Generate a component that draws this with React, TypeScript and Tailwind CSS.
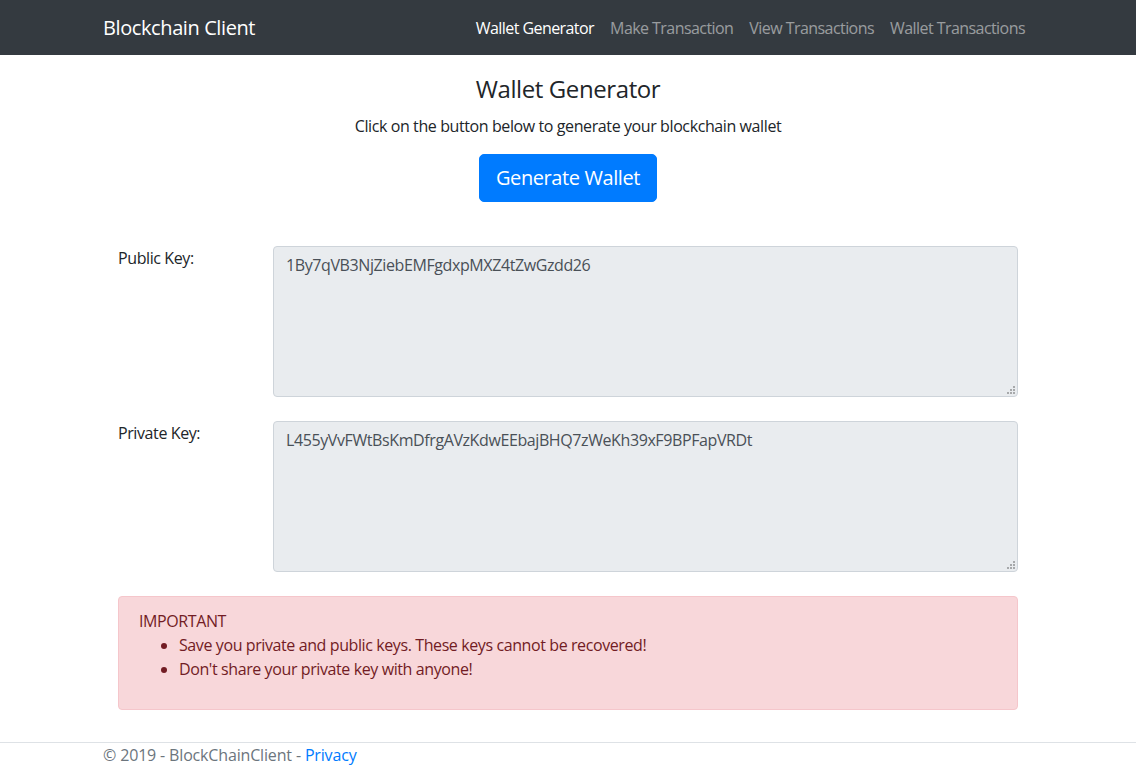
const navLinks = [
  { label: "Wallet Generator", active: true },
  { label: "Make Transaction", active: false },
  { label: "View Transactions", active: false },
  { label: "Wallet Transactions", active: false },
];

const keys = [
  { label: "Public Key:", value: "1By7qVB3NjZiebEMFgdxpMXZ4tZwGzdd26" },
  { label: "Private Key:", value: "L455yVvFWtBsKmDfrgAVzKdwEEbajBHQ7zWeKh39xF9BPFapVRDt" },
];

function Grip() {
  return (
    <svg width="8" height="8" viewBox="0 0 8 8" className="absolute right-[3px] bottom-[3px] pointer-events-none">
      <g fill="#a7a9ab">
        <rect x="6" y="0" width="2" height="2" />
        <rect x="3" y="3" width="2" height="2" />
        <rect x="6" y="3" width="2" height="2" />
        <rect x="0" y="6" width="2" height="2" />
        <rect x="3" y="6" width="2" height="2" />
        <rect x="6" y="6" width="2" height="2" />
      </g>
    </svg>
  );
}

export default function App() {
  return (
    <div className="min-h-[765px] bg-white text-[16px] leading-[24px] tracking-[-0.025em] text-[#212529] font-['Open_Sans',sans-serif] flex flex-col">
      <nav className="bg-[#343a40] h-[55px]">
        <div className="w-[960px] mx-auto px-[15px] h-full flex items-center justify-between">
          <a className="text-white text-[20px] leading-[30px]">Blockchain Client</a>
          <ul className="flex tracking-[-0.035em]">
            {navLinks.map((l) => (
              <li key={l.label}>
                <a className={`px-2 ${l.active ? "text-white" : "text-white/50"}`}>{l.label}</a>
              </li>
            ))}
          </ul>
        </div>
      </nav>

      <main className="flex-1 w-[960px] mx-auto px-[15px]">
        <div className="text-center pt-[19px]">
          <h4 className="text-[24px] leading-[29px] mb-[11px]">Wallet Generator</h4>
          <p className="mb-4">Click on the button below to generate your blockchain wallet</p>
          <button className="bg-[#007bff] text-white text-[20px] leading-[30px] px-4 py-2 rounded-[5px] border border-[#007bff]">
            Generate Wallet
          </button>
        </div>

        <div className="mt-[44px] flex flex-col gap-6">
          {keys.map((k) => (
            <div key={k.label} className="flex">
              <label className="w-[155px] px-[15px]">{k.label}</label>
              <div className="flex-1 px-[15px]">
                <div className="relative">
                  <textarea
                    readOnly
                    value={k.value}
                    className="block w-full h-[151px] resize-none bg-[#e9ecef] border border-[#ced4da] rounded-[4px] px-3 py-[6px] text-[#495057] outline-none"
                  />
                  <Grip />
                </div>
              </div>
            </div>
          ))}

          <div className="mx-[15px] bg-[#f8d7da] border border-[#f5c6cb] rounded-[4px] px-5 py-3 text-[#721c24]">
            <div>IMPORTANT</div>
            <ul className="list-disc pl-10 mb-4">
              <li>Save you private and public keys. These keys cannot be recovered!</li>
              <li>Don't share your private key with anyone!</li>
            </ul>
          </div>
        </div>
      </main>

      <footer className="border-t border-[#dee2e6] mt-8">
        <div className="w-[960px] mx-auto px-[15px] text-[#6c757d] tracking-[-0.01em]">
          © 2019 - BlockChainClient - <a className="text-[#007bff]">Privacy</a>
        </div>
      </footer>
    </div>
  );
}
